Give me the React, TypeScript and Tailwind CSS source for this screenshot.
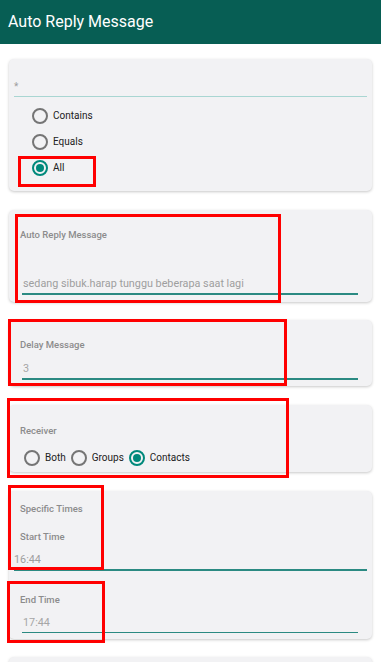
import React from "react";

const font = { fontFamily: "Roboto, 'Noto Sans', sans-serif" };

function Radio({ checked, label }: { checked?: boolean; label: string }) {
  return (
    <div className="flex items-center">
      <div
        className={
          checked
            ? "w-[16px] h-[16px] rounded-full border-2 border-[#00897b] flex items-center justify-center"
            : "w-[16px] h-[16px] rounded-full border-2 border-[#757575]"
        }
      >
        {checked && <div className="w-[8px] h-[8px] rounded-full bg-[#00897b]" />}
      </div>
      <span className="ml-[5px] text-[10px] leading-[14px] text-[#212121]">{label}</span>
    </div>
  );
}

function Card({ className, children }: { className?: string; children?: React.ReactNode }) {
  return (
    <div
      className={
        "mx-[9px] bg-[#f2f2f4] rounded-[5px] shadow-[0_1px_3px_rgba(0,0,0,0.22)] flex flex-col " +
        (className ?? "")
      }
    >
      {children}
    </div>
  );
}

function Label({ children, className }: { children: React.ReactNode; className?: string }) {
  return (
    <div className={"pl-[11px] text-[9.5px] leading-[12px] font-medium text-[#8c8c8c] " + (className ?? "")}>
      {children}
    </div>
  );
}

export default function App() {
  return (
    <div className="relative w-[381px] h-[662px] overflow-hidden bg-white" style={font}>
      <div className="h-[44px] bg-[#075e54] flex items-center pl-[8px]">
        <span className="text-white text-[16px] leading-none">Auto Reply Message</span>
      </div>

      <div className="flex flex-col pt-[15px]">
        {/* Card 1 */}
        <Card className="h-[132px]">
          <div className="h-[37px] flex items-end pl-[5px] pb-[4px]">
            <span className="text-[10px] leading-[10px] text-[#9e9e9e]">*</span>
          </div>
          <div className="mx-[5px] h-[1px] bg-[#a9d6d2]" />
          <div className="flex flex-col pl-[23px] pt-[6px]">
            <div className="h-[26px] flex items-center">
              <Radio label="Contains" />
            </div>
            <div className="h-[26px] flex items-center">
              <Radio label="Equals" />
            </div>
            <div className="h-[26px] flex items-center">
              <Radio checked label="All" />
            </div>
          </div>
        </Card>

        {/* Card 2 */}
        <Card className="h-[92px] mt-[19px] pt-[19px]">
          <Label>Auto Reply Message</Label>
          <div className="mt-[36px] pl-[14px] text-[10.8px] leading-[14px] text-[#9e9e9e]">
            sedang sibuk.harap tunggu beberapa saat lagi
          </div>
          <div className="mt-[2px] ml-[13px] mr-[14px] h-[1.5px] bg-[#2b8a82]" />
        </Card>

        {/* Card 3 */}
        <Card className="h-[66px] mt-[18px] pt-[19px]">
          <Label>Delay Message</Label>
          <div className="mt-[11px] pl-[14px] text-[10.8px] leading-[14px] text-[#a6a6a6]">3</div>
          <div className="mt-[2px] ml-[13px] mr-[14px] h-[1.5px] bg-[#2b8a82]" />
        </Card>

        {/* Card 4 */}
        <Card className="h-[67px] mt-[19px] pt-[20px]">
          <Label>Receiver</Label>
          <div className="mt-[13px] flex items-center pl-[15px] gap-[5px]">
            <Radio label="Both" />
            <Radio label="Groups" />
            <Radio checked label="Contacts" />
          </div>
        </Card>

        {/* Card 5 */}
        <Card className="h-[148px] mt-[19px] pt-[12px]">
          <Label>Specific Times</Label>
          <Label className="mt-[16px]">Start Time</Label>
          <div className="mt-[10px] pl-[5px] text-[10.8px] leading-[14px] text-[#9e9e9e]">16:44</div>
          <div className="mt-[2px] mx-[5px] h-[1.5px] bg-[#2b8a82]" />
          <Label className="mt-[23px]">End Time</Label>
          <div className="mt-[10px] pl-[14px] text-[10.8px] leading-[14px] text-[#a6a6a6]">17:44</div>
          <div className="mt-[2px] ml-[13px] mr-[14px] h-[1.5px] bg-[#2b8a82]" />
        </Card>

        {/* Card 6 */}
        <Card className="h-[40px] mt-[18px]" />
      </div>

      {/* Red annotation boxes */}
      <div className="absolute left-[18px] top-[156px] w-[78px] h-[31px] border-[3px] border-[#ff0000]" />
      <div className="absolute left-[15px] top-[214px] w-[266px] h-[89px] border-[3px] border-[#ff0000]" />
      <div className="absolute left-[8px] top-[319px] w-[279px] h-[67px] border-[3px] border-[#ff0000]" />
      <div className="absolute left-[7px] top-[398px] w-[282px] h-[80px] border-[3px] border-[#ff0000]" />
      <div className="absolute left-[8px] top-[485px] w-[96px] h-[85px] border-[3px] border-[#ff0000]" />
      <div className="absolute left-[7px] top-[581px] w-[98px] h-[62px] border-[3px] border-[#ff0000]" />
    </div>
  );
}
